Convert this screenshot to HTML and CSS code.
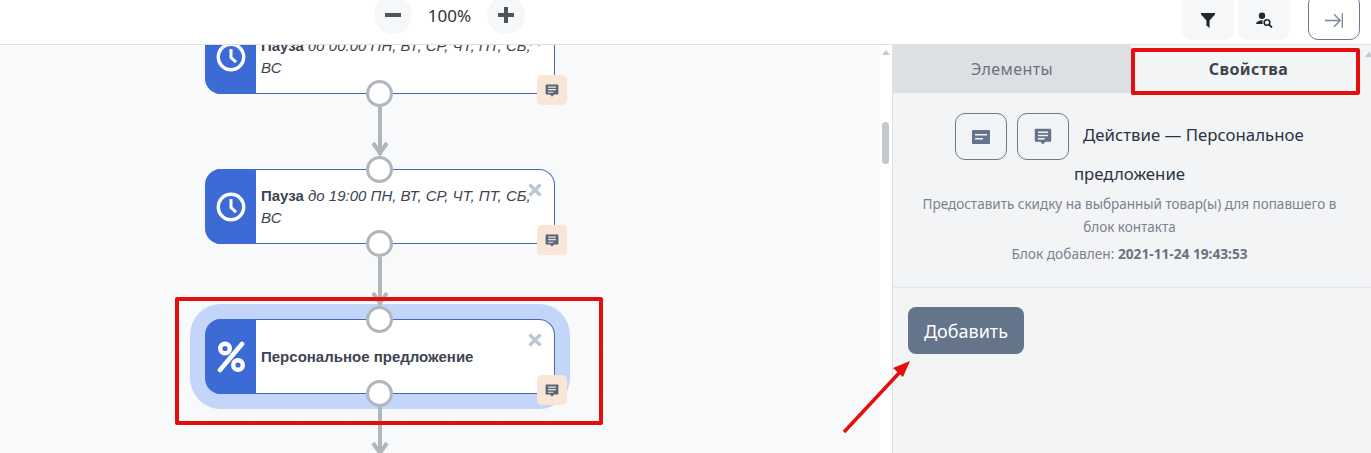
FILE: index.html
```html
<!DOCTYPE html>
<html lang="en">
<head>
    <meta charset="UTF-8">
    <meta name="viewport" content="width=device-width, initial-scale=1.0">
    <title>Автоворонка</title>
    <link rel="stylesheet" href="styles.css">
</head>
<body>
    <svg class="icon-defs" width="0" height="0">
        <defs>
            <symbol id="iconComment" viewBox="0 0 16 16">
                <path fill="currentColor" fill-rule="evenodd" d="M1.5 1h13a.8.8 0 0 1 .8.8v10a.8.8 0 0 1-.8.8h-4.3L8 15l-2.200-2.400H1.500a.8.8 0 0 1-.8-.8v-10a.8.8 0 0 1 .8-.8zM3.500 3.500v1.300h9V3.500zm0 2.900v1.300h9V6.400zm0 2.900v1.300h6V9.300z"/>
            </symbol>
            <symbol id="iconClock" viewBox="0 0 32 32">
                <circle cx="16" cy="16" r="12.700" fill="none" stroke="currentColor" stroke-width="3.400"/>
                <path fill="none" stroke="currentColor" stroke-width="3" d="M16 8v8.500l5 4.700"/>
            </symbol>
            <symbol id="iconClose" viewBox="0 0 14 14">
                <path fill="none" stroke="currentColor" stroke-width="3.400" d="M1.500 1.500l11 11M12.500 1.500l-11 11"/>
            </symbol>
        </defs>
    </svg>

    <header class="topbar">
        <div class="zoom-controls">
            <button class="round-btn" type="button">
                <svg width="16" height="16" viewBox="0 0 16 16"><path d="M0 6h16v4H0z" fill="currentColor"/></svg>
            </button>
            <span class="zoom-value">100%</span>
            <button class="round-btn" type="button">
                <svg width="16" height="16" viewBox="0 0 16 16"><path d="M6 0h4v6h6v4h-6v6H6v-6H0V6h6z" fill="currentColor"/></svg>
            </button>
        </div>
        <div class="tools">
            <button class="tool-btn" type="button">
                <svg width="14" height="15" viewBox="0 0 14 15"><path d="M0 0h14v1.500L8.600 7.500V15L5.400 12.500V7.500L0 1.500z" fill="#24292f"/></svg>
            </button>
            <button class="tool-btn" type="button">
                <svg width="17" height="16" viewBox="0 0 17 16">
                    <circle cx="6" cy="3.700" r="3.200" fill="#24292f"/>
                    <path d="M0 12c.5-2.500 3-3.800 7-3.700-.8 1.300-.6 2.700 0 3.700z" fill="#24292f"/>
                    <circle cx="11" cy="10.500" r="2.800" fill="none" stroke="#24292f" stroke-width="1.600"/>
                    <path d="M13 12.500l3 3" stroke="#24292f" stroke-width="1.800"/>
                </svg>
            </button>
            <button class="collapse-btn" type="button">
                <svg width="18" height="15" viewBox="0 0 18 15" fill="none" stroke="#7a8696" stroke-width="1.300"><path d="M0 7.500h15M9 1.200l6.200 6.300L9 13.800M17.300 0v15"/></svg>
            </button>
        </div>
    </header>

    <main class="workspace">
        <section class="canvas">
            <svg class="links" width="880" height="409" viewBox="0 0 880 409">
                <!-- coordinates start under the 45px top bar -->
                <path d="M173 98l7 10 7-10M180 62v48" fill="none" stroke="#afb6bc" stroke-width="4"/>
                <path d="M173 248l7 10 7-10M180 212v48" fill="none" stroke="#afb6bc" stroke-width="4"/>
                <path d="M173 398l7 10 7-10M180 360v50" fill="none" stroke="#afb6bc" stroke-width="4"/>
            </svg>

            <article class="node node-first">
                <div class="node-icon"><svg width="32" height="32"><use href="#iconClock"/></svg></div>
                <p class="node-text"><b>Пауза</b> <i>до 00:00 ПН, ВТ, СР, ЧТ, ПТ, СБ, ВС</i></p>
                <svg class="node-close" width="14" height="14"><use href="#iconClose"/></svg>
                <span class="port port-bottom"></span>
                <span class="note-badge"><svg width="14" height="15"><use href="#iconComment"/></svg></span>
            </article>

            <article class="node node-second">
                <div class="node-icon"><svg width="32" height="32"><use href="#iconClock"/></svg></div>
                <p class="node-text"><b>Пауза</b> <i>до 19:00 ПН, ВТ, СР, ЧТ, ПТ, СБ, ВС</i></p>
                <svg class="node-close" width="14" height="14"><use href="#iconClose"/></svg>
                <span class="port port-top"></span>
                <span class="port port-bottom"></span>
                <span class="note-badge"><svg width="14" height="15"><use href="#iconComment"/></svg></span>
            </article>

            <article class="node node-third selected">
                <div class="node-icon">
                    <svg width="32" height="32" viewBox="0 0 32 32" fill="none" stroke="#fff">
                        <circle cx="10" cy="7.500" r="4.800" stroke-width="4.400"/>
                        <circle cx="23" cy="24" r="4.800" stroke-width="4.400"/>
                        <path d="M27 3L5 29" stroke-width="4.600" stroke-linecap="round"/>
                    </svg>
                </div>
                <p class="node-text single"><b>Персональное предложение</b></p>
                <svg class="node-close" width="14" height="14"><use href="#iconClose"/></svg>
                <span class="port port-top"></span>
                <span class="port port-bottom"></span>
                <span class="note-badge"><svg width="14" height="15"><use href="#iconComment"/></svg></span>
            </article>

            <div class="mark-box"></div>

            <div class="scrollbar"><span class="scroll-up"></span><span class="scroll-thumb"></span></div>
        </section>

        <aside class="sidebar">
            <nav class="tabs">
                <div class="tab">Элементы</div>
                <div class="tab active">Свойства</div>
            </nav>
            <div class="props">
                <div class="props-head">
                    <span class="square-btn"><svg width="18" height="14" viewBox="0 0 18 14"><path fill="#64748b" fill-rule="evenodd" d="M1 0h16a1 1 0 0 1 1 1v12a1 1 0 0 1-1 1H1a1 1 0 0 1-1-1V1a1 1 0 0 1 1-1zm2 4v1.600h12V4zm0 4v1.600h8V8z"/></svg></span>
                    <span class="square-btn"><svg width="18" height="19" class="icon-slate"><use href="#iconComment"/></svg></span>
                    <span class="props-title">Действие — Персональное предложение</span>
                </div>
                <p class="props-desc">Предоставить скидку на выбранный товар(ы) для попавшего в блок контакта</p>
                <p class="props-date">Блок добавлен: <b>2021-11-24 19:43:53</b></p>
            </div>
            <div class="actions">
                <button class="add-btn" type="button">Добавить</button>
            </div>
            <div class="mark-tab"></div>
            <span class="side-scroll-up"></span>
        </aside>

        <svg class="mark-arrow" width="80" height="80" viewBox="0 0 80 80">
            <path d="M2 78L58 18" stroke="#e60d0d" stroke-width="3.500"/>
            <path d="M68 7L61 23 51 14z" fill="#e60d0d"/>
        </svg>
    </main>
</body>
</html>
```

FILE: styles.css
```css
* {
    box-sizing: border-box;
}
html, body {
    height: 100%;
}
body {
    margin: 0;
    overflow: hidden;
    display: flex;
    flex-direction: column;
    font-family: "Noto Sans", sans-serif;
    color: #2b3440;
    background-color: #fff;
}
button {
    font-family: inherit;
    cursor: pointer;
}
.icon-defs {
    position: absolute;
}

/* top bar */
.topbar {
    position: relative;
    z-index: 3;
    flex: none;
    height: 45px;
    background-color: #fff;
    border-bottom: 1px solid #dde1e6;
    display: flex;
    align-items: flex-start;
    padding-left: 374px;
    padding-right: 11px;
}
.zoom-controls {
    display: flex;
    align-items: center;
    margin-top: -4px;
}
.round-btn {
    width: 38px;
    height: 38px;
    border: none;
    border-radius: 50%;
    background-color: #f6f7f9;
    color: #4d545c;
    padding: 0;
    display: flex;
    align-items: center;
    justify-content: center;
}
.zoom-value {
    width: 75px;
    text-align: center;
    font-size: 17px;
    color: #2b3440;
}
.tools {
    margin-left: auto;
    display: flex;
    align-items: flex-start;
}
.tool-btn {
    width: 52px;
    height: 46px;
    margin-top: -6px;
    margin-right: 4px;
    border: none;
    border-radius: 10px;
    background-color: #f6f7f9;
    padding: 6px 0 0;
    display: flex;
    align-items: center;
    justify-content: center;
}
.collapse-btn {
    width: 52px;
    height: 46px;
    margin-top: -6px;
    margin-left: 14px;
    padding: 6px 0 0;
    background-color: #fff;
    border: 1px solid #6b7a8f;
    border-radius: 10px;
    display: flex;
    align-items: center;
    justify-content: center;
}

/* layout under the bar */
.workspace {
    position: relative;
    flex: 1;
    min-height: 0;
    display: flex;
}
.canvas {
    position: relative;
    width: 892px;
    flex: none;
    overflow: hidden;
    background-color: #f8f9fb;
    background-image:
        linear-gradient(#fbfcfd 1px, transparent 1px),
        linear-gradient(90deg, #fbfcfd 1px, transparent 1px);
    background-size: 50px 50px;
}
.links {
    position: absolute;
    left: 200px;
    top: 0;
    z-index: 2;
}

/* diagram nodes sit on a free canvas */
.node {
    position: absolute;
    left: 205px;
    width: 350px;
    height: 75px;
    display: flex;
    background-color: #fff;
    border: 1px solid #4468b8;
    border-left: none;
    border-radius: 16px;
}
.node-first {
    top: -26px;
}
.node-second {
    top: 124px;
}
.node-third {
    top: 274px;
}
.node.selected {
    box-shadow: 0 0 0 15px #c3d6f9;
}
.node-icon {
    flex: none;
    width: 51px;
    margin: -1px 0;
    background-color: #3d6bd6;
    color: #fff;
    border-radius: 16px 0 0 16px;
    display: flex;
    align-items: center;
    justify-content: center;
}
.node-text {
    margin: 0;
    padding: 15px 15px 0 5px;
    font-family: "Liberation Sans", Arial, sans-serif;
    font-size: 15px;
    line-height: 22px;
    color: #3d4550;
}
.node-text.single {
    padding-top: 26px;
}
.node-close {
    position: absolute;
    top: 13px;
    right: 12px;
    color: #bcc7d0;
}
.port {
    position: absolute;
    z-index: 3;
    left: 161px;
    width: 27px;
    height: 27px;
    background-color: #fff;
    border: 3px solid #afb6bc;
    border-radius: 50%;
}
.port-top {
    top: -14px;
}
.port-bottom {
    bottom: -14px;
}
.note-badge {
    position: absolute;
    z-index: 3;
    right: -13px;
    bottom: -12px;
    width: 30px;
    height: 30px;
    border-radius: 5px;
    background-color: #fae6d6;
    color: #56657a;
    display: flex;
    align-items: center;
    justify-content: center;
}

/* red marks over the screenshot */
.mark-box {
    position: absolute;
    z-index: 4;
    left: 175px;
    top: 252px;
    width: 428px;
    height: 128px;
    border: 4px solid #e60d0d;
    border-radius: 2px;
}
.mark-tab {
    position: absolute;
    left: 238px;
    top: 3px;
    width: 229px;
    height: 47px;
    border: 4px solid #e60d0d;
    border-radius: 2px;
}
.mark-arrow {
    position: absolute;
    z-index: 4;
    left: 842px;
    top: 309px;
}

/* canvas scrollbar */
.scrollbar {
    position: absolute;
    z-index: 3;
    right: 0;
    top: 0;
    bottom: 0;
    width: 12px;
    background-color: #fff;
}
.scroll-up {
    position: absolute;
    left: 2px;
    top: 5px;
    border-left: 4px solid transparent;
    border-right: 4px solid transparent;
    border-bottom: 5px solid #c4c9ce;
}
.scroll-thumb {
    position: absolute;
    left: 2px;
    top: 77px;
    width: 7px;
    height: 42px;
    border-radius: 4px;
    background-color: #c4c9ce;
}

/* properties panel */
.sidebar {
    position: relative;
    flex: 1;
    display: flex;
    flex-direction: column;
    background-color: #f3f4f6;
    border-left: 1px solid #dde1e6;
}
.side-scroll-up {
    position: absolute;
    right: -2px;
    top: 7px;
    border-left: 4px solid transparent;
    border-right: 4px solid transparent;
    border-bottom: 5px solid #c4c9ce;
}
.tabs {
    display: flex;
    height: 48px;
}
.tab {
    width: 238px;
    text-align: center;
    font-size: 16px;
    line-height: 48px;
    letter-spacing: 0.4px;
    color: #6b7280;
    background-color: #dcdfe3;
}
.tab.active {
    flex: 1;
    padding-right: 5px;
    font-weight: 700;
    color: #3d4550;
    background-color: #f3f4f6;
}
.props {
    padding: 20px 20px 23px 15px;
    text-align: center;
    border-bottom: 1px solid #e3e6ea;
}
.props-head {
    font-size: 16.8px;
    line-height: 28px;
    color: #2b3440;
}
.square-btn {
    display: inline-flex;
    align-items: center;
    justify-content: center;
    vertical-align: middle;
    width: 52px;
    height: 47px;
    margin-right: 5px;
    border: 1px solid #6b7a8f;
    border-radius: 10px;
}
.icon-slate {
    color: #64748b;
}
.props-title {
    margin-left: 5px;
}
.props-desc {
    margin: 5px 0 0;
    font-size: 13.5px;
    line-height: 23px;
    color: #7b828c;
}
.props-date {
    margin: 5px 0 0;
    font-size: 13.7px;
    line-height: 20px;
    color: #7b828c;
}
.props-date b {
    color: #6b7280;
}
.actions {
    padding: 19px 15px;
}
.add-btn {
    width: 116px;
    height: 47px;
    border: none;
    border-radius: 8px;
    background-color: #64748b;
    color: #fff;
    font-size: 18px;
}
```
